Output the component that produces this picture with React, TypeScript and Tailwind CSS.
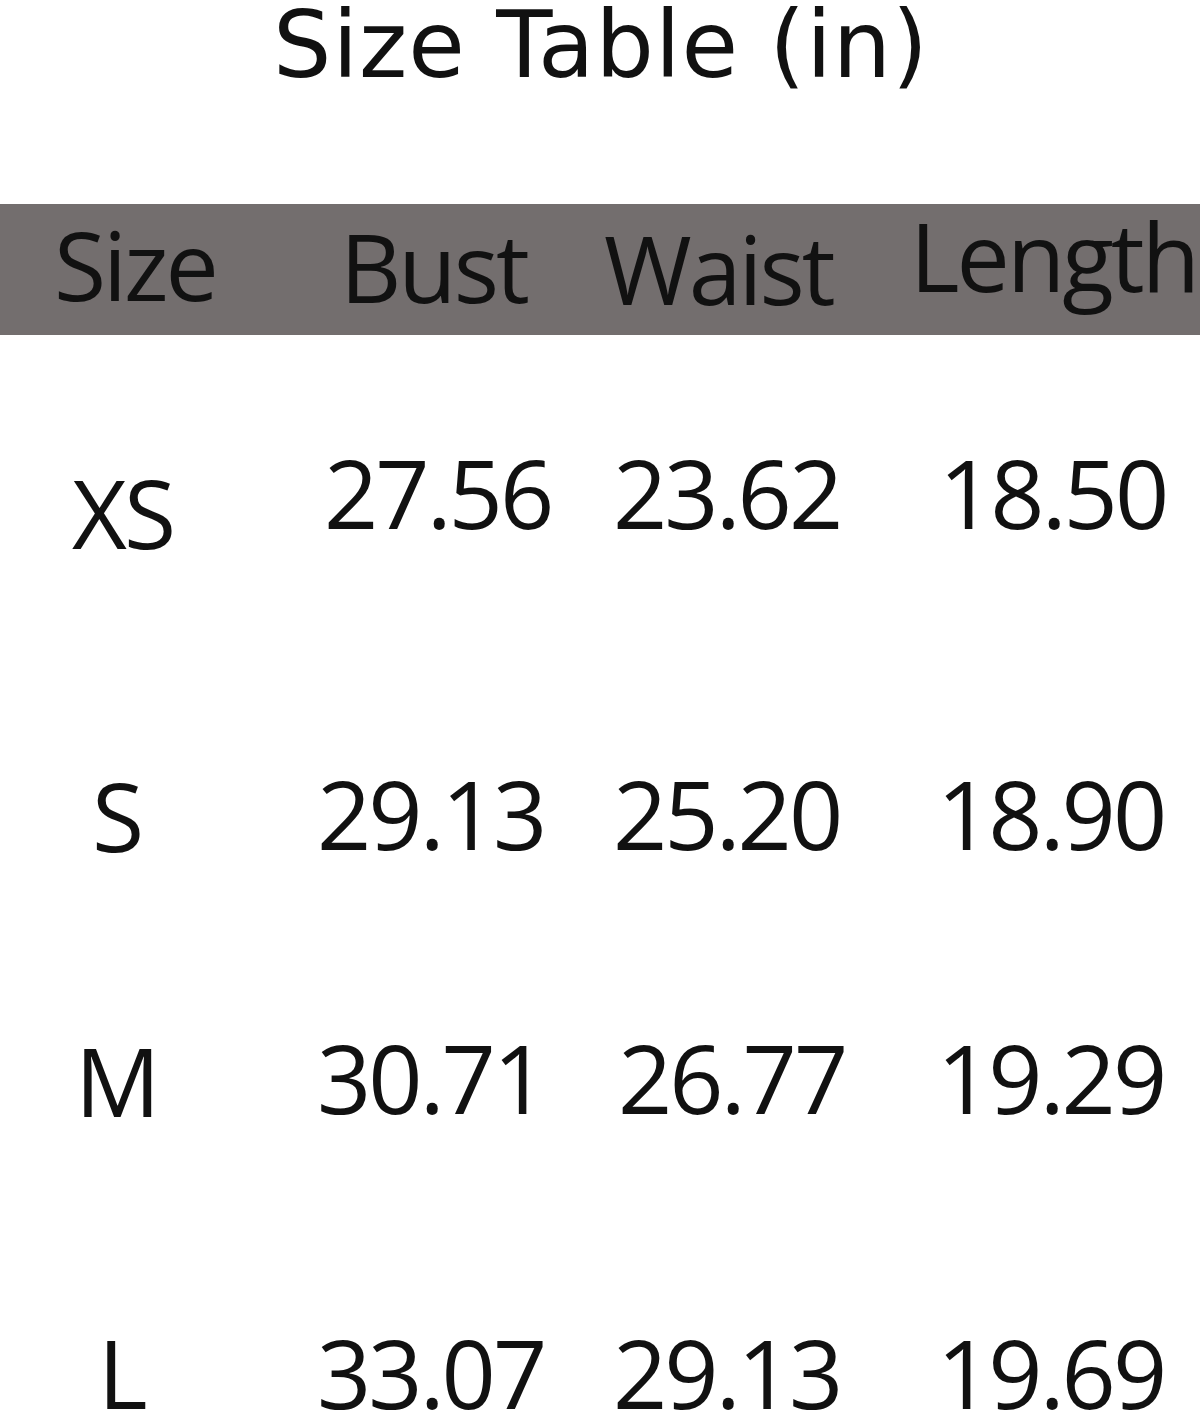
import React from 'react'

const rows = [
    {
        h: 'h-[320px]',
        cells: [
            { text: 'XS', cls: 'w-[300px] pl-[72px] mt-[130px]' },
            { text: '27.56', cls: 'w-[290px] pl-[24px] mt-[110px]' },
            { text: '23.62', cls: 'w-[310px] pl-[23px] mt-[110px]' },
            { text: '18.50', cls: 'w-[300px] pl-[39px] mt-[110px]' },
        ],
    },
    {
        h: 'h-[320px]',
        cells: [
            { text: 'S', cls: 'w-[300px] pl-[92px] mt-[113px]' },
            { text: '29.13', cls: 'w-[290px] pl-[17px] mt-[111px]' },
            { text: '25.20', cls: 'w-[310px] pl-[23px] mt-[111px]' },
            { text: '18.90', cls: 'w-[300px] pl-[37px] mt-[111px]' },
        ],
    },
    {
        h: 'h-[295px]',
        cells: [
            { text: 'M', cls: 'w-[300px] pl-[75px] mt-[58px]' },
            { text: '30.71', cls: 'w-[290px] pl-[17px] mt-[55px]' },
            { text: '26.77', cls: 'w-[310px] pl-[28px] mt-[55px]' },
            { text: '19.29', cls: 'w-[300px] pl-[37px] mt-[55px]' },
        ],
    },
    {
        h: 'h-[143px]',
        cells: [
            { text: 'L', cls: 'w-[300px] pl-[98px] mt-[55px]' },
            { text: '33.07', cls: 'w-[290px] pl-[17px] mt-[55px]' },
            { text: '29.13', cls: 'w-[310px] pl-[23px] mt-[55px]' },
            { text: '19.69', cls: 'w-[300px] pl-[37px] mt-[55px]' },
        ],
    },
]

const headers = [
    { text: 'Size', cls: 'w-[300px] pl-[54px] mt-[13px]' },
    { text: 'Bust', cls: 'w-[290px] pl-[40px] mt-[15px]' },
    { text: 'Waist', cls: 'w-[310px] pl-[14px] mt-[17px]' },
    { text: 'Length', cls: 'w-[300px] pl-[10px] mt-[4px]' },
]

const App = () => {
    return (
        <div className="w-[1200px] h-[1413px] overflow-hidden bg-white text-[#111111]">
            <div className="h-[204px] flex justify-center">
                <h1 className="pl-[2px] text-[92px] leading-none font-['DejaVu_Sans',sans-serif] tracking-[1px] whitespace-nowrap">
                    Size Table (in)
                </h1>
            </div>
            <div className="h-[131px] bg-[#736e6e] flex items-start font-['Open_Sans',sans-serif] text-[95px] leading-none tracking-[-3px] whitespace-nowrap">
                {headers.map((c) => (
                    <div key={c.text} className={c.cls}>{c.text}</div>
                ))}
            </div>
            <div className="font-['Open_Sans',sans-serif] text-[95px] leading-none tracking-[-3px] whitespace-nowrap">
                {rows.map((r, i) => (
                    <div key={i} className={`flex items-start ${r.h}`}>
                        {r.cells.map((c, j) => (
                            <div key={j} className={c.cls}>{c.text}</div>
                        ))}
                    </div>
                ))}
            </div>
        </div>
    )
}

export default App;
